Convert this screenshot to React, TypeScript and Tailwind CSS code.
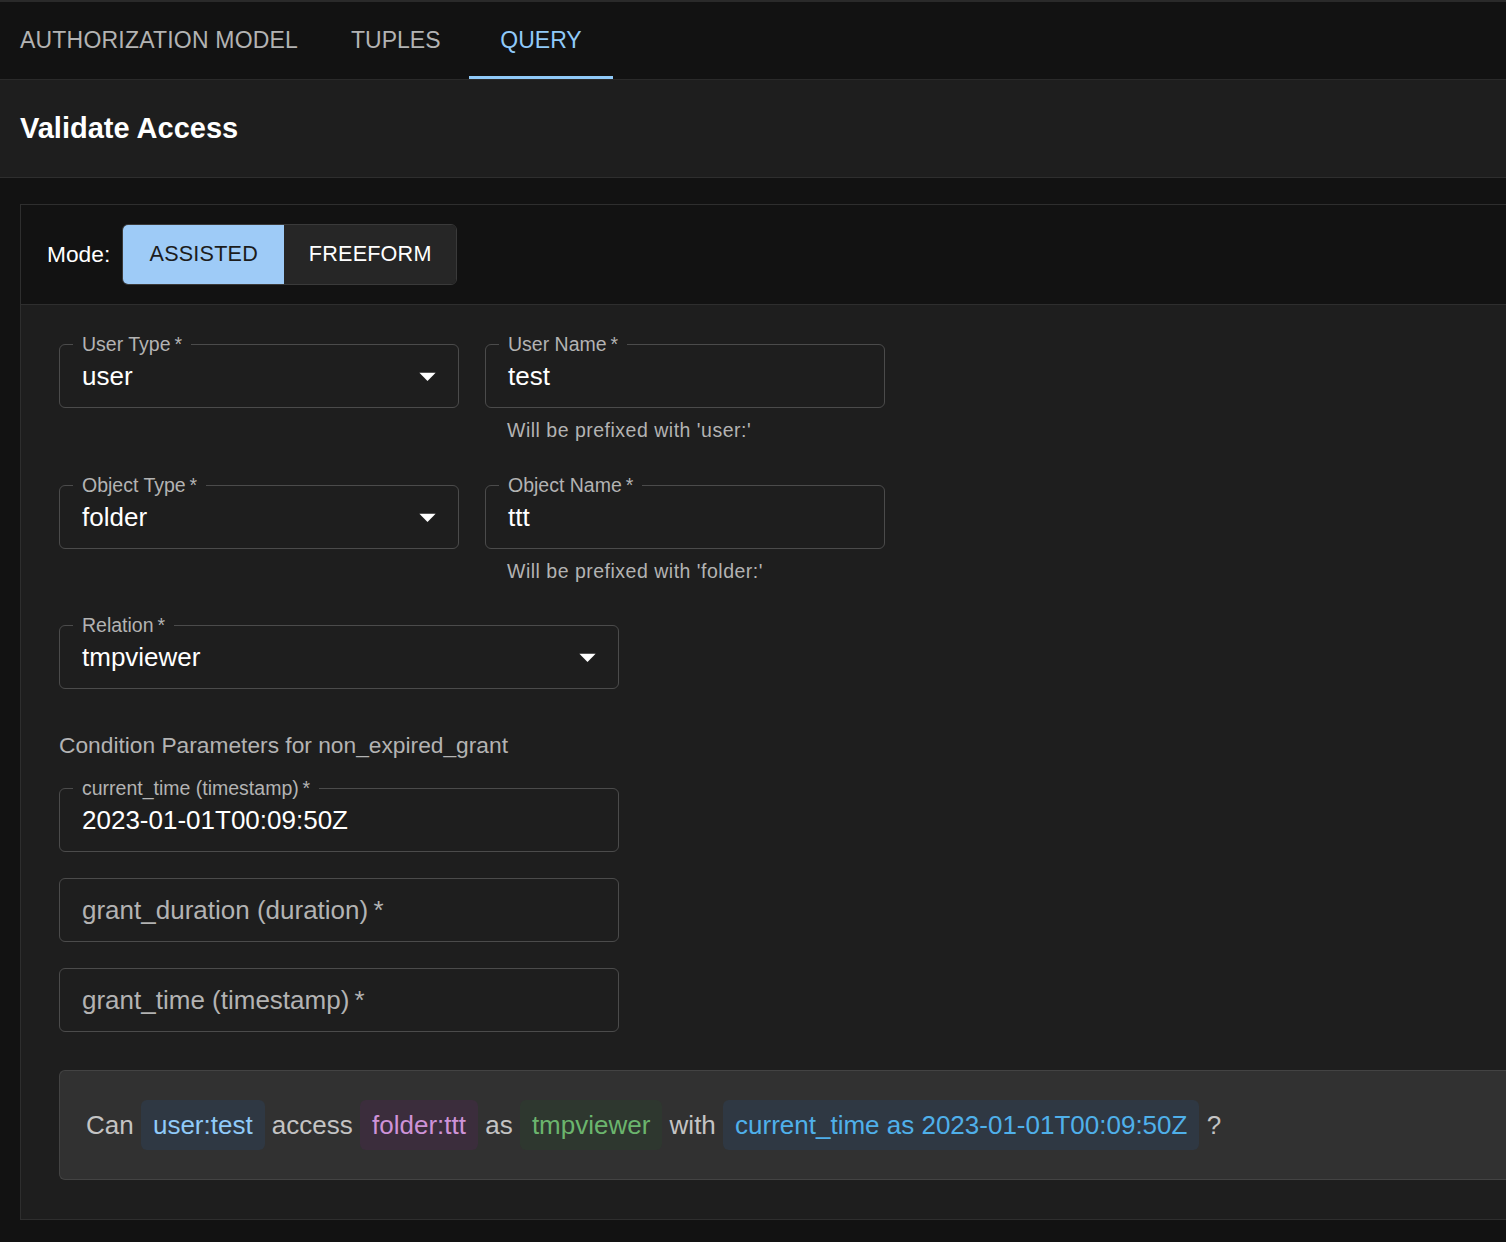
import React from 'react'

const font = { fontFamily: '"Liberation Sans", Arial, Helvetica, sans-serif' }

function Arrow() {
  return (
    <svg className="absolute right-[11px] top-1/2 -translate-y-1/2 w-[39px] h-[39px]" viewBox="0 0 24 24" fill="#ffffff">
      <path d="M7 10l5 5 5-5z" />
    </svg>
  )
}

interface FieldProps {
  label?: string
  value?: string
  placeholder?: string
  select?: boolean
  helper?: string
  width: string
}

function Field({ label, value, placeholder, select, helper, width }: FieldProps) {
  return (
    <div className={`flex flex-col ${width}`}>
      <div className="relative h-[64px] rounded-[6px] border border-[#4b4b4b] flex items-center px-[22px]">
        {label && (
          <span className="absolute left-[13px] -top-[13px] px-[9px] bg-[#1e1e1e] text-[19.5px] leading-[24px] text-[#b3b3b3] whitespace-nowrap">
            {label}
            {'\u2009*'}
          </span>
        )}
        {value ? (
          <span className="text-[26px] text-white leading-none">{value}</span>
        ) : (
          <span className="text-[26px] text-[#b3b3b3] leading-none">
            {placeholder}
            {'\u2009*'}
          </span>
        )}
        {select && <Arrow />}
      </div>
      {helper && (
        <div className="mt-[9px] ml-[22px] text-[19.5px] leading-[26px] tracking-[0.5px] text-[#b3b3b3]">{helper}</div>
      )}
    </div>
  )
}

function Chip({ text, className }: { text: string; className: string }) {
  return <span className={`inline-block rounded-[6px] px-[12px] leading-[50px] ${className}`}>{text}</span>
}

export default function App() {
  return (
    <div className="min-h-[1242px] w-full overflow-hidden bg-[#121212]" style={font}>
      {/* tabs */}
      <div className="flex h-[80px] border-t-2 border-b border-[#2a2a2a] bg-[#121212]">
        <div className="w-[323px] flex items-center pl-[20px] text-[23px] tracking-[0.2px] text-[#b3b3b3]">AUTHORIZATION MODEL</div>
        <div className="w-[146px] flex items-center pl-[28px] text-[23px] text-[#b3b3b3]">TUPLES</div>
        <div className="relative w-[144px] flex items-center justify-center text-[23px] text-[#90caf9]">
          QUERY
          <div className="absolute left-0 right-0 bottom-0 h-[3px] bg-[#90caf9]" />
        </div>
      </div>

      {/* page title */}
      <div className="h-[98px] flex items-center px-[20px] bg-[#1e1e1e] border-b border-[#2e2e2e]">
        <h1 className="text-[29px] font-bold text-white">Validate Access</h1>
      </div>

      {/* card */}
      <div className="ml-[20px] mt-[26px] w-[1700px] border-l border-t border-b border-[#2e2e2e]">
        <div className="h-[100px] flex items-center pl-[26px] gap-[12px] bg-[#121212] border-b border-[#2e2e2e]">
          <span className="text-[22.75px] text-white">Mode:</span>
          <div className="flex h-[61px] rounded-[6px] overflow-hidden border border-[#3a3a3a]">
            <div className="w-[161px] flex items-center justify-center bg-[#9ecbf7] text-[21.6px] text-[#1c1c1c] tracking-[0.2px]">ASSISTED</div>
            <div className="w-[172px] flex items-center justify-center bg-[#262626] text-[21.6px] text-white tracking-[0.2px]">FREEFORM</div>
          </div>
        </div>

        <div className="bg-[#1e1e1e] pl-[38px] pt-[39px] pb-[39px] flex flex-col">
          <div className="flex gap-[26px] mb-[42px]">
            <Field width="w-[400px]" label="User Type" value="user" select />
            <Field width="w-[400px]" label="User Name" value="test" helper="Will be prefixed with 'user:'" />
          </div>
          <div className="flex gap-[26px] mb-[41px]">
            <Field width="w-[400px]" label="Object Type" value="folder" select />
            <Field width="w-[400px]" label="Object Name" value="ttt" helper="Will be prefixed with 'folder:'" />
          </div>
          <Field width="w-[560px]" label="Relation" value="tmpviewer" select />

          <div className="mt-[39px] h-[34px] flex items-center text-[22.75px] text-[#b3b3b3]">
            Condition Parameters for non_expired_grant
          </div>

          <div className="mt-[26px] flex flex-col gap-[26px]">
            <Field width="w-[560px]" label="current_time (timestamp)" value="2023-01-01T00:09:50Z" />
            <Field width="w-[560px]" placeholder="grant_duration (duration)" />
            <Field width="w-[560px]" placeholder="grant_time (timestamp)" />
          </div>

          <div className="mt-[38px] h-[110px] rounded-l-[6px] border border-r-0 border-[#434343] bg-[#313131] flex items-center pl-[26px] text-[26px] text-[#c4c4c4] whitespace-pre">
            <span>Can </span>
            <Chip text="user:test" className="bg-[#2f3843] text-[#90caf9]" />
            <span> access </span>
            <Chip text="folder:ttt" className="bg-[#3b2d3c] text-[#ce93d8]" />
            <span> as </span>
            <Chip text="tmpviewer" className="bg-[#2e372f] text-[#6bb56d]" />
            <span> with </span>
            <Chip text="current_time as 2023-01-01T00:09:50Z" className="bg-[#2f3843] text-[#4fb0ea]" />
            <span> ?</span>
          </div>
        </div>
      </div>
    </div>
  )
}
